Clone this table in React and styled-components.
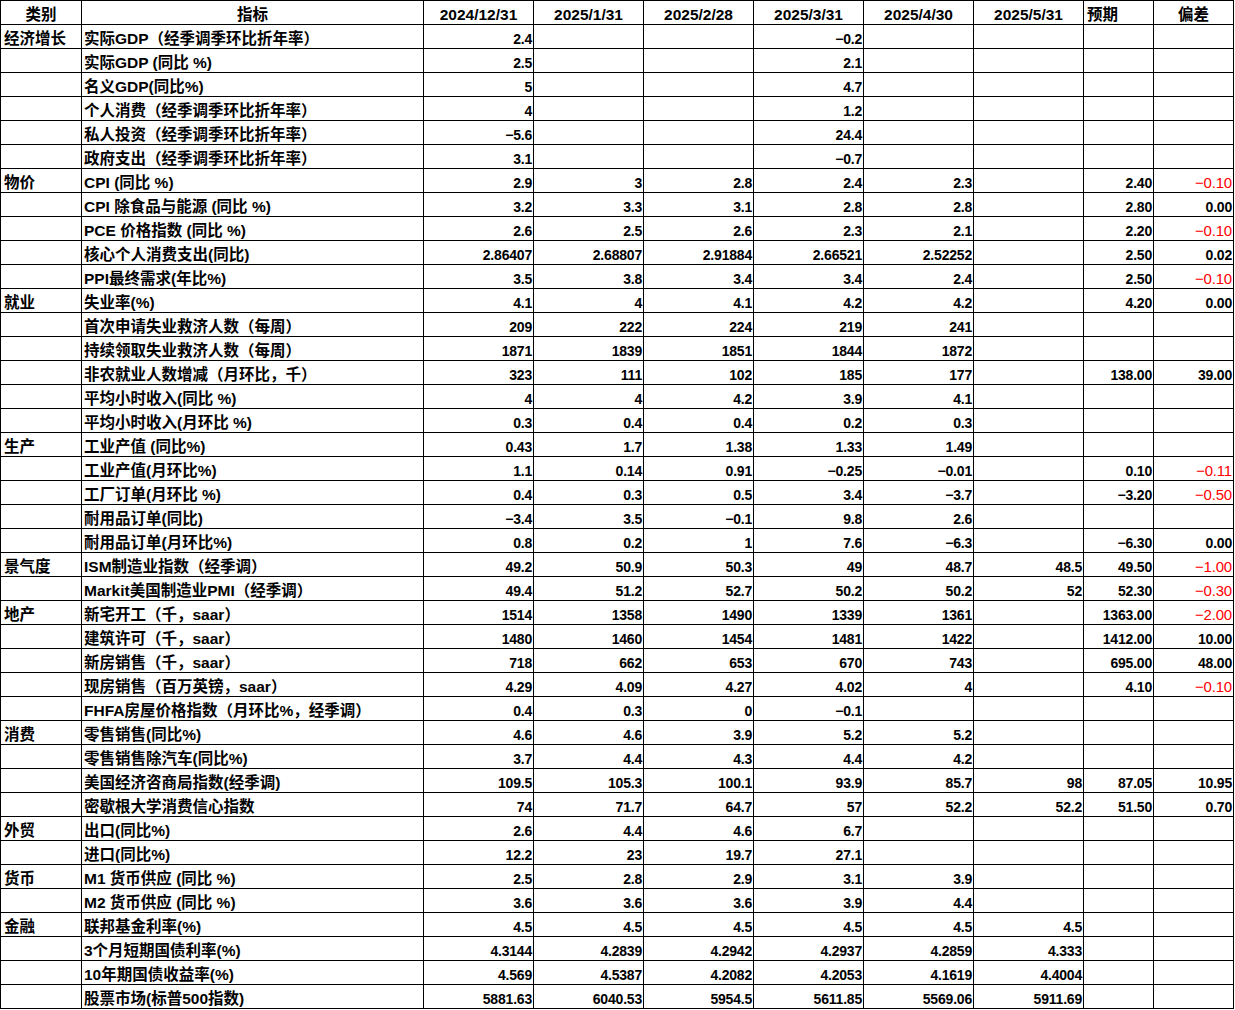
import styled, { createGlobalStyle } from 'styled-components';

const GlobalStyle = createGlobalStyle`
  html, body {
    margin: 0;
    padding: 0;
    background: #fff;
  }
  body {
    font-family: "Liberation Sans", "Noto Sans CJK SC", sans-serif;
    color: #000;
  }
`;

const Sheet = styled.table`
  border-collapse: collapse;
  table-layout: fixed;
  width: 1233px;
  font-weight: 700;
`;

const Row = styled.tr`
  height: 24px;
`;

const HeadCell = styled.th`
  border: 1px solid #000;
  padding: 0 3px 0;
  font-size: 15.5px;
  font-weight: 700;
  text-align: ${({ $align }) => $align || 'center'};
  vertical-align: bottom;
  line-height: 18px;
  white-space: nowrap;
`;

const CatCell = styled.td`
  border: 1px solid #000;
  padding: 0 3px 0;
  font-size: 15.5px;
  vertical-align: bottom;
  line-height: 18px;
  white-space: nowrap;
`;

const NameCell = styled(CatCell)`
  padding-left: 2px;
`;

const NumCell = styled.td`
  border: 1px solid #000;
  padding: 0 1px 0 0;
  font-size: 14px;
  letter-spacing: -0.2px;
  text-align: right;
  vertical-align: bottom;
  line-height: 18px;
  white-space: nowrap;
  color: ${({ $red }) => ($red ? '#ff0000' : '#000')};
  font-weight: ${({ $red }) => ($red ? 400 : 700)};
  font-size: ${({ $red }) => ($red ? '15px' : '14px')};
`;

const widths = [81, 342, 110, 110, 110, 110, 110, 110, 70, 80];

const heads = [
  ['类别'],
  ['指标'],
  ['2024/12/31'],
  ['2025/1/31'],
  ['2025/2/28'],
  ['2025/3/31'],
  ['2025/4/30'],
  ['2025/5/31'],
  ['预期', 'left'],
  ['偏差'],
];

const m = '−';

const rows = [
  ['经济增长', '实际GDP（经季调季环比折年率）', ['2.4', '', '', `${m}0.2`, '', '', '', '']],
  ['', '实际GDP (同比 %)', ['2.5', '', '', '2.1', '', '', '', '']],
  ['', '名义GDP(同比%)', ['5', '', '', '4.7', '', '', '', '']],
  ['', '个人消费（经季调季环比折年率）', ['4', '', '', '1.2', '', '', '', '']],
  ['', '私人投资（经季调季环比折年率）', [`${m}5.6`, '', '', '24.4', '', '', '', '']],
  ['', '政府支出（经季调季环比折年率）', ['3.1', '', '', `${m}0.7`, '', '', '', '']],
  ['物价', 'CPI (同比 %)', ['2.9', '3', '2.8', '2.4', '2.3', '', '2.40', `${m}0.10`]],
  ['', 'CPI 除食品与能源 (同比 %)', ['3.2', '3.3', '3.1', '2.8', '2.8', '', '2.80', '0.00']],
  ['', 'PCE 价格指数 (同比 %)', ['2.6', '2.5', '2.6', '2.3', '2.1', '', '2.20', `${m}0.10`]],
  ['', '核心个人消费支出(同比)', ['2.86407', '2.68807', '2.91884', '2.66521', '2.52252', '', '2.50', '0.02']],
  ['', 'PPI最终需求(年比%)', ['3.5', '3.8', '3.4', '3.4', '2.4', '', '2.50', `${m}0.10`]],
  ['就业', '失业率(%)', ['4.1', '4', '4.1', '4.2', '4.2', '', '4.20', '0.00']],
  ['', '首次申请失业救济人数（每周）', ['209', '222', '224', '219', '241', '', '', '']],
  ['', '持续领取失业救济人数（每周）', ['1871', '1839', '1851', '1844', '1872', '', '', '']],
  ['', '非农就业人数增减（月环比，千）', ['323', '111', '102', '185', '177', '', '138.00', '39.00']],
  ['', '平均小时收入(同比 %)', ['4', '4', '4.2', '3.9', '4.1', '', '', '']],
  ['', '平均小时收入(月环比 %)', ['0.3', '0.4', '0.4', '0.2', '0.3', '', '', '']],
  ['生产', '工业产值 (同比%)', ['0.43', '1.7', '1.38', '1.33', '1.49', '', '', '']],
  ['', '工业产值(月环比%)', ['1.1', '0.14', '0.91', `${m}0.25`, `${m}0.01`, '', '0.10', `${m}0.11`]],
  ['', '工厂订单(月环比 %)', ['0.4', '0.3', '0.5', '3.4', `${m}3.7`, '', `${m}3.20`, `${m}0.50`]],
  ['', '耐用品订单(同比)', [`${m}3.4`, '3.5', `${m}0.1`, '9.8', '2.6', '', '', '']],
  ['', '耐用品订单(月环比%)', ['0.8', '0.2', '1', '7.6', `${m}6.3`, '', `${m}6.30`, '0.00']],
  ['景气度', 'ISM制造业指数（经季调）', ['49.2', '50.9', '50.3', '49', '48.7', '48.5', '49.50', `${m}1.00`]],
  ['', 'Markit美国制造业PMI（经季调）', ['49.4', '51.2', '52.7', '50.2', '50.2', '52', '52.30', `${m}0.30`]],
  ['地产', '新宅开工（千，saar）', ['1514', '1358', '1490', '1339', '1361', '', '1363.00', `${m}2.00`]],
  ['', '建筑许可（千，saar）', ['1480', '1460', '1454', '1481', '1422', '', '1412.00', '10.00']],
  ['', '新房销售（千，saar）', ['718', '662', '653', '670', '743', '', '695.00', '48.00']],
  ['', '现房销售（百万英镑，saar）', ['4.29', '4.09', '4.27', '4.02', '4', '', '4.10', `${m}0.10`]],
  ['', 'FHFA房屋价格指数（月环比%，经季调）', ['0.4', '0.3', '0', `${m}0.1`, '', '', '', '']],
  ['消费', '零售销售(同比%)', ['4.6', '4.6', '3.9', '5.2', '5.2', '', '', '']],
  ['', '零售销售除汽车(同比%)', ['3.7', '4.4', '4.3', '4.4', '4.2', '', '', '']],
  ['', '美国经济咨商局指数(经季调)', ['109.5', '105.3', '100.1', '93.9', '85.7', '98', '87.05', '10.95']],
  ['', '密歇根大学消费信心指数', ['74', '71.7', '64.7', '57', '52.2', '52.2', '51.50', '0.70']],
  ['外贸', '出口(同比%)', ['2.6', '4.4', '4.6', '6.7', '', '', '', '']],
  ['', '进口(同比%)', ['12.2', '23', '19.7', '27.1', '', '', '', '']],
  ['货币', 'M1 货币供应 (同比 %)', ['2.5', '2.8', '2.9', '3.1', '3.9', '', '', '']],
  ['', 'M2 货币供应 (同比 %)', ['3.6', '3.6', '3.6', '3.9', '4.4', '', '', '']],
  ['金融', '联邦基金利率(%)', ['4.5', '4.5', '4.5', '4.5', '4.5', '4.5', '', '']],
  ['', '3个月短期国债利率(%)', ['4.3144', '4.2839', '4.2942', '4.2937', '4.2859', '4.333', '', '']],
  ['', '10年期国债收益率(%)', ['4.569', '4.5387', '4.2082', '4.2053', '4.1619', '4.4004', '', '']],
  ['', '股票市场(标普500指数)', ['5881.63', '6040.53', '5954.5', '5611.85', '5569.06', '5911.69', '', '']],
];

const App = () => {
  return (
    <>
      <GlobalStyle />
      <Sheet>
        <colgroup>
          {widths.map((w, i) => (
            <col key={i} style={{ width: w }} />
          ))}
        </colgroup>
        <thead>
          <Row>
            {heads.map(([label, align]) => (
              <HeadCell key={label} $align={align}>{label}</HeadCell>
            ))}
          </Row>
        </thead>
        <tbody>
          {rows.map(([cat, name, values], i) => (
            <Row key={i}>
              <CatCell>{cat}</CatCell>
              <NameCell>{name}</NameCell>
              {values.map((v, j) => (
                <NumCell key={j} $red={j === 7 && v.startsWith(m)}>{v}</NumCell>
              ))}
            </Row>
          ))}
        </tbody>
      </Sheet>
    </>
  );
};

export default App;
